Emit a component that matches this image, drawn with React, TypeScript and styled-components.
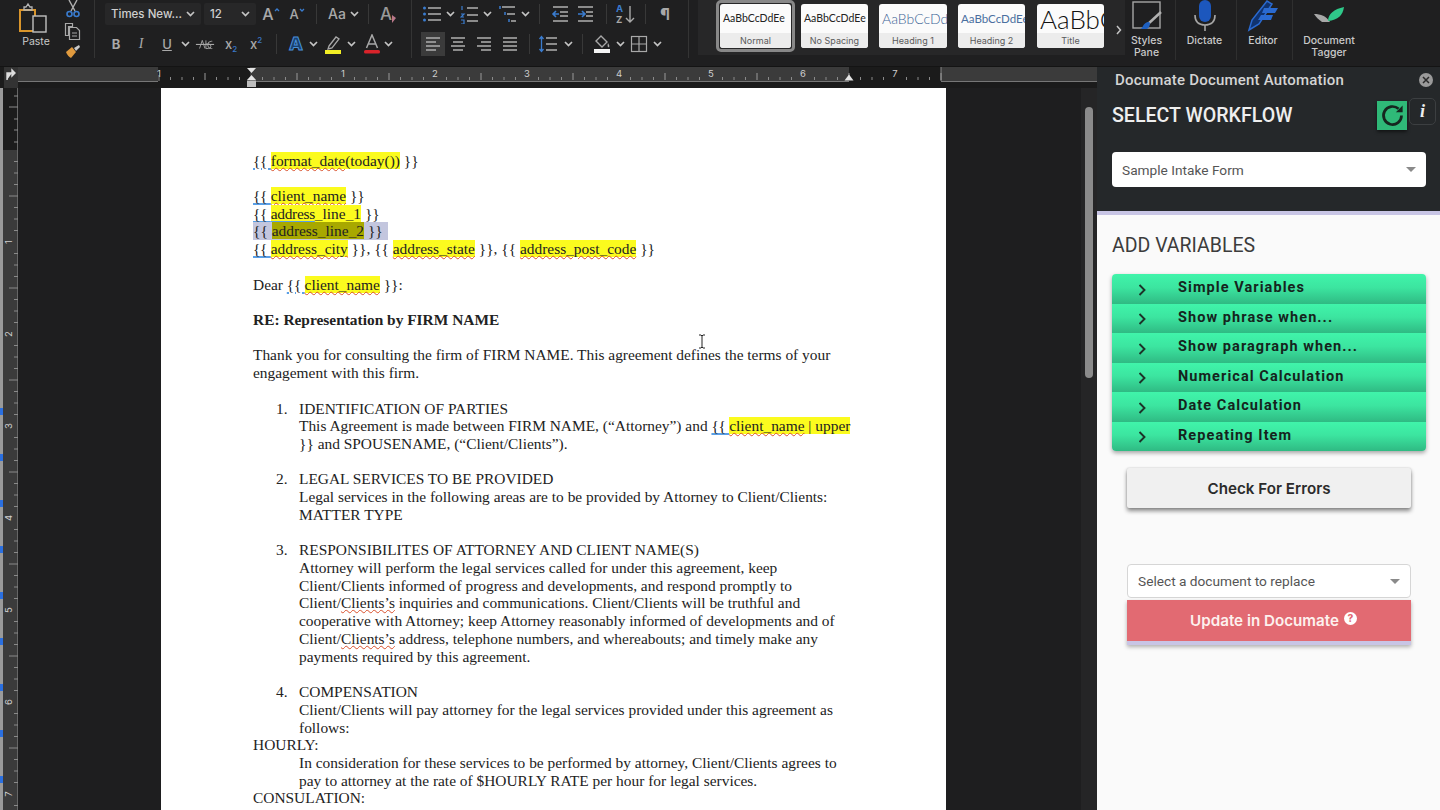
import React from "react";
import styled, { createGlobalStyle } from "styled-components";

const Global = createGlobalStyle`
  html, body { margin: 0; padding: 0; background: #1e1e1e; overflow: hidden; }
  * { box-sizing: border-box; }
`;

const UI = `Inter, "Liberation Sans", sans-serif`;

const Root = styled.div`
  width: 1440px; height: 810px; overflow: hidden; display: flex; flex-direction: column;
  background: #1e1e1f; font-family: ${UI};
`;

/* ---------- Ribbon ---------- */
const Ribbon = styled.header`
  height: 67px; flex: none; display: flex; background: #1f1f20; border-bottom: 1px solid #141414;
`;
const ClipSection = styled.section`
  width: 95px; height: 58px; flex: none; display: flex; border-right: 1px solid #343434;
`;
const PasteBlock = styled.div`
  width: 62px; padding-left: 17px; display: flex; flex-direction: column;
`;
const PasteTop = styled.div`
  height: 35px; display: flex; align-items: center; gap: 1px;
`;
const PasteLabel = styled.div`
  font-size: 10.5px; line-height: 14px; color: #c9c9c9; width: 38px; text-align: center;
`;
const ClipTools = styled.div`
  width: 22px; display: flex; flex-direction: column; align-items: center; justify-content: space-between; height: 60px;
`;
const ToolSection = styled.section<{ $w: number }>`
  width: ${p => p.$w}px; height: 58px; flex: none; border-right: 1px solid #343434;
  display: flex; flex-direction: column; gap: 8px; padding-top: 3px;
`;
const ToolRow = styled.div<{ $pad: number }>`
  height: 22px; display: flex; align-items: center; padding-left: ${p => p.$pad}px;
`;
const Slot = styled.div<{ $w?: number; $ml?: number; $active?: boolean }>`
  width: ${p => p.$w ?? 20}px; height: ${p => (p.$active ? 24 : 22)}px; margin-left: ${p => p.$ml ?? 0}px; flex: none;
  display: flex; align-items: center; justify-content: center;
  background: ${p => (p.$active ? "#3b3b3b" : "transparent")};
`;
const Sep = styled.div<{ $ml: number }>`
  width: 1px; height: 20px; flex: none; background: #383838; margin-left: ${p => p.$ml}px;
`;
const FieldBox = styled.div<{ $w: number; $ml: number }>`
  width: ${p => p.$w}px; margin-left: ${p => p.$ml}px; height: 22px; flex: none; background: #272728; border-radius: 2px;
  display: flex; align-items: center; justify-content: space-between; padding: 0 6px; font-size: 11.5px; font-weight: 500; color: #cfcfcf; white-space: nowrap;
`;
const Glyph = styled.span<{ $size?: number; $color?: string; $weight?: number; $italic?: boolean; $serif?: boolean; $under?: boolean; $stroke?: string }>`
  position: relative; font-size: ${p => p.$size ?? 13}px; color: ${p => p.$color ?? "#a9a9a9"}; font-weight: ${p => p.$weight ?? 500};
  font-style: ${p => (p.$italic ? "italic" : "normal")}; line-height: 1;
  font-family: ${p => (p.$serif ? `"Liberation Serif", serif` : UI)};
  text-decoration: ${p => (p.$under ? "underline" : "none")};
  -webkit-text-stroke: ${p => p.$stroke ?? "0"};
`;
const Sub = styled.sub`
  font-size: 8px; color: #3a78c8; vertical-align: -3px; line-height: 0;
`;
const Sup = styled.sup`
  font-size: 8px; color: #3a78c8; vertical-align: 6px; line-height: 0;
`;
const Gallery = styled.section`
  width: 427px; height: 55px; margin-left: 9px; flex: none; background: #272728; display: flex; align-items: flex-start; padding-left: 18px; position: relative;
`;
const SelectedFrame = styled.div`
  width: 79px; height: 52px; border: 3px solid #888; border-radius: 5px; padding: 1px; flex: none; display: flex;
`;
const Tile = styled.div<{ $w?: number; $ml?: number }>`
  width: ${p => (p.$w ? `${p.$w}px` : "100%")}; height: ${p => (p.$w ? "44px" : "100%")}; margin-top: ${p => (p.$w ? "4px" : "0")}; margin-left: ${p => p.$ml ?? 0}px;
  flex: none; background: #fbfbfb; border-radius: 3px; overflow: hidden; display: flex; flex-direction: column;
`;
const TileSample = styled.div<{ $size: number; $color?: string; $light?: boolean }>`
  height: 29px; font-family: Lato, "Liberation Sans", sans-serif; font-size: ${p => p.$size}px; color: ${p => p.$color ?? "#222"};
  font-weight: ${p => (p.$light ? 300 : 400)};
  white-space: nowrap; overflow: hidden; display: flex; align-items: center; padding-left: 3px; line-height: 1;
`;
const TileName = styled.div`
  flex: 1; background: #ececec; font-size: 9px; color: #5a5a5a; display: flex; align-items: center; justify-content: center;
`;
const GalleryNext = styled.div`
  position: absolute; right: 3px; top: 19px;
`;
const BigBtn = styled.div<{ $w: number; $pr?: number; $noline?: boolean }>`
  width: ${p => p.$w}px; height: 60px; flex: none; padding-right: ${p => p.$pr ?? 0}px;
  border-right: ${p => (p.$noline ? "none" : "1px solid #2f2f2f")};
  display: flex; flex-direction: column; align-items: center;
`;
const BigIcon = styled.div`
  height: 35px; flex: none; display: flex; align-items: flex-start; justify-content: center;
`;
const BigLabel = styled.div`
  font-size: 10.5px; line-height: 12px; color: #c9c9c9; text-align: center; white-space: pre-line; font-weight: 500; flex: none;
`;

const Caret = () => (
  <svg width="9" height="6" viewBox="0 0 9 6"><path d="M1 1l3.5 3.5L8 1" fill="none" stroke="#c4c4c4" strokeWidth="1.7" /></svg>
);
const CaretSlot = ({ ml }: { ml: number }) => <Slot $w={10} $ml={ml}><Caret /></Slot>;

const Ico = ({ children, w = 20, h = 20 }: { children: React.ReactNode; w?: number; h?: number }) => (
  <svg width={w} height={h} viewBox={`0 0 ${w} ${h}`} fill="none">{children}</svg>
);
const G = "#a8a8a8";
const B = "#3a7ccf";
const Lines = ({ rows }: { rows: [number, number, number][] }) => (
  <>{rows.map(([x1, x2, y], i) => <path key={i} d={`M${x1} ${y}H${x2}`} stroke={G} strokeWidth="1.6" />)}</>
);

/* ---------- Ruler ---------- */
const RulerBar = styled.svg`
  display: block; flex: none;
`;
const Ruler = () => {
  const ticks: React.ReactNode[] = [];
  for (let i = 0; i <= 68; i++) {
    const x = 159 + i * 11.5;
    if (i % 8 === 0) continue;
    const tall = i % 8 === 4;
    ticks.push(<path key={i} d={`M${x} ${tall ? 6 : 10}V13`} stroke={tall ? "#9a9a9a" : "#8a8a8a"} strokeWidth="1" />);
  }
  const nums: [string, number][] = [["1", 159], ["1", 343], ["2", 435], ["3", 527], ["4", 619], ["5", 711], ["6", 803], ["7", 895]];
  return (
    <RulerBar width="1097" height="21" viewBox="0 0 1097 21">
      <rect width="1097" height="21" fill="#1b1b1b" />
      <rect x="4" width="14" height="21" fill="#333" />
      <rect x="18" width="140" height="14" fill="#3b3b3b" />
      <rect x="250" width="599" height="14" fill="#3b3b3b" />
      <rect x="941" width="156" height="14" fill="#3b3b3b" />
      <path d="M18 14.5H158M250 14.5H849M941 14.5H1097" stroke="#777" />
      <path d="M159 8V14M941 0V14" stroke="#888" />
      <path d="M7 13V6h5M12 3v6l3-3z" stroke="#ddd" strokeWidth="1.4" fill="#ddd" />
      {ticks}
      {nums.map(([n, x], i) => (
        <text key={i} x={x} y="10" textAnchor="middle" fontSize="9.5" fill="#cfcfcf" fontFamily="Inter, sans-serif">{n}</text>
      ))}
      <path d="M247 1h9l-4.500 5z" fill="#e4e4e4" />
      <path d="M247 13l4.500-5 4.500 5z" fill="#e4e4e4" />
      <rect x="247" y="13.500" width="9" height="6.500" fill="#bdbdbd" />
      <path d="M844.500 13.500l4.500-6 4.500 6z" fill="#e4e4e4" />
    </RulerBar>
  );
};

const VRuler = () => {
  const ticks: React.ReactNode[] = [];
  for (let i = 0; i < 60; i++) {
    const y = 62 + i * 11.5;
    const long = i % 8 === 4;
    if (i % 8 === 0) continue;
    ticks.push(<path key={i} d={`M${long ? 9 : 14} ${y}H18`} stroke="#8a8a8a" />);
  }
  const nums = [1, 2, 3, 4, 5, 6, 7];
  const blues = [320, 366, 412, 458, 504, 550, 596, 642, 688];
  return (
    <RulerBar width="18" height="722" viewBox="0 0 18 722">
      <rect width="3" height="722" fill="#9a9a9a" />
      <rect x="3" width="15" height="722" fill="#3b3b3b" />
      <rect x="3" width="15" height="62" fill="#1c1c1c" />
      <path d="M17.500 0V722" stroke="#666" />
      {[8, 19, 31, 42, 54].map(y => <path key={y} d={`M${y === 19 ? 9 : 14} ${y}H18`} stroke="#8a8a8a" />)}
      {blues.map(y => <rect key={y} y={y} width="3" height="7" fill="#2a6fe0" />)}
      {ticks}
      {nums.map((n, i) => (
        <text key={n} transform={`translate(11.500 ${154 + i * 92}) rotate(-90)`} textAnchor="middle" fontSize="9.500" fill="#cfcfcf" fontFamily="Inter, sans-serif">{n}</text>
      ))}
    </RulerBar>
  );
};

/* ---------- Document ---------- */
const Body = styled.main`
  flex: 1; display: flex; min-height: 0;
`;
const Work = styled.div`
  width: 1097px; flex: none; display: flex; flex-direction: column; min-height: 0;
`;
const DocRow = styled.div`
  flex: 1; display: flex; min-height: 0; overflow: hidden;
`;
const DocArea = styled.div`
  flex: 1; padding-left: 143px; background: #1e1e1f; overflow: hidden;
`;
const ScrollTrack = styled.div`
  width: 16px; flex: none; background: #252526; padding: 19px 3px 0 4px;
`;
const ScrollThumb = styled.div`
  width: 8px; height: 271px; border-radius: 4px; background: #8b8b8b;
`;
const Page = styled.article`
  width: 785px; min-height: 760px; background: #fff; padding: 63.5px 0 0 92px; position: relative;
  font-family: "Liberation Serif", "Times New Roman", serif; font-size: 15.42px; color: #222;
`;
const Line = styled.div<{ $indent?: boolean }>`
  height: 17.72px; line-height: 17.72px; white-space: nowrap; padding-left: ${p => (p.$indent ? "46px" : "0")};
`;
const NumLine = styled(Line)`
  display: flex; white-space: pre;
`;
const Num = styled.span`
  width: 46px; padding-left: 23px; flex: none;
`;
const Hl = styled.span<{ $dim?: boolean }>`
  background: ${p => (p.$dim ? "#a8a800" : "#fbfb1e")};
`;
const Wavy = styled.span`
  text-decoration: underline wavy #d8502c 1px; text-underline-offset: 1px;
`;
const Brace = styled.span`
  letter-spacing: -0.3px;
  text-decoration: underline solid #5a9fe6 2px; text-underline-offset: 2px;
`;
const Selected = styled.span`
  background: #c3c6de; display: inline-block; height: 17.72px; padding-right: 5px;
`;
const Bold = styled.strong`
  font-weight: 700;
`;
const IBeam = styled.svg`
  position: absolute; left: 537px; top: 246px;
`;

const Tag = ({ name, rest = " }}" }: { name: string; rest?: string }) => (
  <><Brace>{"{{ "}</Brace><Hl><Wavy>{name}</Wavy></Hl>{rest}</>
);

/* ---------- Panel ---------- */
const Panel = styled.aside`
  flex: 1; display: flex; flex-direction: column; background: #fafafa; font-family: Roboto, sans-serif;
`;
const PanelHead = styled.div`
  height: 148px; flex: none; background: #25282a; border-bottom: 4px solid #c8c5e5; display: flex; flex-direction: column;
`;
const PanelTitleRow = styled.div`
  height: 31px; display: flex; align-items: flex-start; justify-content: space-between; padding: 5px 7px 0 18px;
`;
const PanelTitle = styled.div`
  font-size: 15px; line-height: 17px; font-weight: 500; color: #d4d4d4; letter-spacing: 0.2px;
`;
const CloseDot = styled.div`
  width: 14px; height: 14px; margin-top: 1px; border-radius: 50%; background: #9a9a9a; display: flex; align-items: center; justify-content: center;
`;
const WorkflowRow = styled.div`
  height: 33px; display: flex; align-items: flex-start; padding: 0 4px 0 15px;
`;
const WorkflowTitle = styled.h2`
  margin: 6px 0 0; font-size: 19.6px; line-height: 24px; font-weight: 500; color: #eee; white-space: nowrap;
`;
const RefreshBtn = styled.div`
  width: 30px; height: 29px; margin: 3px 0 0 auto; background: #2fb978; box-shadow: 0 2px 3px rgba(0,0,0,.5); display: flex; align-items: center; justify-content: center;
`;
const InfoBtn = styled.div`
  width: 27px; height: 27px; margin-left: 2px; border: 1px solid #3c3f41; border-radius: 5px; display: flex; align-items: center; justify-content: center;
  font-family: "Liberation Serif", serif; font-style: italic; font-weight: 700; font-size: 18px; color: #eee;
`;
const SelectBox = styled.div<{ $w: number; $h: number; $mt: number; $ml: number; $border?: boolean }>`
  width: ${p => p.$w}px; height: ${p => p.$h}px; margin: ${p => p.$mt}px 0 0 ${p => p.$ml}px; flex: none; background: #fff; border-radius: 4px;
  border: ${p => (p.$border ? "1px solid #d6d6d6" : "none")};
  display: flex; align-items: center; justify-content: space-between; padding: 0 10px; font-size: 13.7px; color: #555;
`;
const DownTri = styled.span`
  width: 0; height: 0; border-left: 5px solid transparent; border-right: 5px solid transparent; border-top: 5px solid #8a8a8a;
`;
const PanelBody = styled.div`
  flex: 1; display: flex; flex-direction: column;
`;
const AddTitle = styled.h2`
  margin: 19px 0 0 15px; font-size: 19.5px; line-height: 24px; font-weight: 400; color: #3c3c3c;
`;
const Accordion = styled.div`
  width: 314px; margin: 16px 0 0 15px; border-radius: 4px; overflow: hidden; box-shadow: 0 2px 4px rgba(0,0,0,.35); flex: none;
`;
const AccRow = styled.div`
  height: 29.5px; display: flex; align-items: center; padding-left: 26px; padding-bottom: 2px;
  background: linear-gradient(#40f4aa, #3ce5a0 45%, #2fba83);
  font-size: 14.5px; font-weight: 700; letter-spacing: 1.07px; color: #15241d; white-space: nowrap;
`;
const AccIcon = styled.span`
  width: 40px; display: flex; flex: none; margin-top: 4px;
`;
const CheckBtn = styled.div`
  width: 284px; height: 40px; margin: 17px 0 0 30px; flex: none; background: #f0f0f0; border-radius: 2px;
  box-shadow: 0 3px 4px rgba(0,0,0,.45), 0 0 2px rgba(0,0,0,.2);
  display: flex; align-items: center; justify-content: center; font-family: Inter, sans-serif; font-size: 15.2px; font-weight: 600; color: #2b2b2b;
`;
const UpdateBtn = styled.div`
  width: 284px; height: 45px; margin: 2px 0 0 30px; flex: none; background: #e26a72; border-bottom: 4px solid #c8c5e5;
  box-shadow: 0 2px 4px rgba(0,0,0,.3);
  display: flex; align-items: center; justify-content: center; gap: 5px; padding-left: 9px;
  font-family: Inter, sans-serif; font-size: 15.2px; font-weight: 600; color: #fdf1ee;
`;
const HelpDot = styled.span`
  width: 13px; height: 13px; margin-top: -5px; border-radius: 50%; background: #fff; color: #e26a72; font-size: 10px; font-weight: 800; line-height: 13px; text-align: center;
`;

const ACCORDION = ["Simple Variables", "Show phrase when...", "Show paragraph when...", "Numerical Calculation", "Date Calculation", "Repeating Item"];

export default function App() {
  return (
    <Root>
      <Global />
      <Ribbon>
        <ClipSection>
          <PasteBlock>
            <PasteTop>
              <Ico w={34} h={32}>
                <rect x="3" y="8" width="15" height="21" stroke="#d9952b" strokeWidth="2" />
                <path d="M7 8V5h2l2-3 2 3h2v3z" stroke="#b5b5b5" strokeWidth="1.300" />
                <rect x="16" y="14" width="13" height="16" fill="#1f1f20" stroke="#c0c0c0" strokeWidth="1.400" />
              </Ico>
            </PasteTop>
            <PasteLabel>Paste</PasteLabel>
          </PasteBlock>
          <ClipTools>
            <Ico w={16} h={18}>
              <path d="M4 0l6 11M12 0L6 11" stroke="#b0b0b0" strokeWidth="1.400" />
              <circle cx="4.500" cy="14" r="2.500" stroke="#3a7ccf" strokeWidth="1.600" />
              <circle cx="11.500" cy="14" r="2.500" stroke="#3a7ccf" strokeWidth="1.600" />
            </Ico>
            <Ico w={18} h={18}>
              <path d="M1.500 1.500h7v3h-4v9h-3z" stroke={G} strokeWidth="1.200" />
              <path d="M5.500 5.500h7l3 3v9h-10z" stroke={G} strokeWidth="1.200" />
              <path d="M8 11h5M8 14h5" stroke={G} />
            </Ico>
            <Ico w={18} h={16}>
              <path d="M2 8l6-5 4 5-5 6C5 13 3 11 2 8z" fill="#e09a3e" />
              <path d="M10 4l5-3 1 2-4 4z" fill="#c9c9c9" />
            </Ico>
          </ClipTools>
        </ClipSection>

        <ToolSection $w={317}>
          <ToolRow $pad={10}>
            <FieldBox $w={96} $ml={0}>Times New...<Caret /></FieldBox>
            <FieldBox $w={52} $ml={3}>12<Caret /></FieldBox>
            <Slot $ml={5}>
              <Glyph $size={16}>A</Glyph>
              <Ico w={6} h={16}><path d="M1 5l2-2 2 2" stroke={B} strokeWidth="1.300" /></Ico>
            </Slot>
            <Slot $ml={6}>
              <Glyph $size={13}>A</Glyph>
              <Ico w={6} h={16}><path d="M1 3l2 2 2-2" stroke={B} strokeWidth="1.300" /></Ico>
            </Slot>
            <Sep $ml={9} />
            <Slot $ml={10}><Glyph $size={14}>Aa</Glyph></Slot>
            <CaretSlot ml={2} />
            <Sep $ml={9} />
            <Slot $ml={10}>
              <Glyph $size={17} $color="#999">A</Glyph>
              <Ico w={6} h={18}><path d="M-6 16l6-6 4 3-4 5h-4z" fill="#b9788a" /></Ico>
            </Slot>
          </ToolRow>
          <ToolRow $pad={11}>
            <Slot><Glyph $weight={700}>B</Glyph></Slot>
            <Slot $ml={5}><Glyph $italic $serif $size={14}>I</Glyph></Slot>
            <Slot $ml={6}><Glyph $under>U</Glyph></Slot>
            <CaretSlot ml={3} />
            <Slot $ml={5}>
              <Ico w={22} h={16}>
                <path d="M1 8.500h20" stroke={G} strokeWidth="1.200" />
                <path d="M5 13l3-9 3 9M12 4v9h3a2 2 0 000-5h-3M19 5h-1a4 4 0 000 8h1" stroke={G} strokeWidth="1" />
              </Ico>
            </Slot>
            <Slot $ml={6}><Glyph>x<Sub>2</Sub></Glyph></Slot>
            <Slot $ml={5}><Glyph>x<Sup>2</Sup></Glyph></Slot>
            <Sep $ml={10} />
            <Slot $ml={9}><Glyph $size={18} $weight={800} $color="#17406f" $stroke="1px #4a90d9">A</Glyph></Slot>
            <CaretSlot ml={2} />
            <Slot $ml={5}>
              <Ico w={20} h={20}>
                <path d="M6 12l7-9 3 2-7 9-4 1z" stroke={G} strokeWidth="1.300" />
                <rect x="2" y="16" width="16" height="4" fill="#f2ee25" />
              </Ico>
            </Slot>
            <CaretSlot ml={3} />
            <Slot $ml={6}>
              <Ico w={18} h={20}>
                <path d="M3.500 14L9 1l5.500 13M5.500 10h7" stroke={G} strokeWidth="1.500" />
                <rect x="1" y="16" width="16" height="3.500" rx="1.500" fill="#d9232a" />
              </Ico>
            </Slot>
            <CaretSlot ml={1} />
          </ToolRow>
        </ToolSection>

        <ToolSection $w={277}>
          <ToolRow $pad={10}>
            <Slot>
              <Ico>
                <path d="M2.500 4v.1M2.500 10v.1M2.500 16v.1" stroke={B} strokeWidth="3" strokeLinecap="round" />
                <Lines rows={[[6, 19, 4], [6, 19, 10], [6, 19, 16]]} />
              </Ico>
            </Slot>
            <CaretSlot ml={3} />
            <Slot $ml={5}>
              <Ico>
                <path d="M2 2v4M1 10h3l-3 3h3M1 16h3v4H1" stroke={B} strokeWidth="1.200" />
                <Lines rows={[[7, 18, 4], [7, 18, 11], [7, 18, 17]]} />
              </Ico>
            </Slot>
            <CaretSlot ml={2} />
            <Slot $ml={6}>
              <Ico>
                <path d="M2 2v3M7 8v3M11 15v3" stroke={B} strokeWidth="1.500" />
                <Lines rows={[[4, 17, 3], [9, 17, 10], [13, 18, 17]]} />
              </Ico>
            </Slot>
            <CaretSlot ml={2} />
            <Sep $ml={9} />
            <Slot $ml={10}>
              <Ico>
                <Lines rows={[[3, 18, 3], [10, 18, 8], [10, 18, 12], [3, 18, 17]]} />
                <path d="M9 10H3M6 7l-3 3 3 3" stroke={B} strokeWidth="1.600" />
              </Ico>
            </Slot>
            <Slot $ml={5}>
              <Ico>
                <Lines rows={[[3, 18, 3], [11, 18, 8], [11, 18, 12], [3, 18, 17]]} />
                <path d="M3 10h6M7 7l3 3-3 3" stroke={B} strokeWidth="1.600" />
              </Ico>
            </Slot>
            <Sep $ml={11} />
            <Slot $ml={8}>
              <Ico w={20} h={22}>
                <text x="1" y="9" fontSize="9.500" fontWeight="700" fill={B} fontFamily="Inter, sans-serif">A</text>
                <text x="1" y="20" fontSize="9.500" fontWeight="700" fill={G} fontFamily="Inter, sans-serif">Z</text>
                <path d="M15 3v16M11 15l4 4 4-4" stroke={G} strokeWidth="1.400" />
              </Ico>
            </Slot>
            <Sep $ml={10} />
            <Slot $ml={9}><Glyph $size={16} $weight={800}>¶</Glyph></Slot>
          </ToolRow>
          <ToolRow $pad={9}>
            <Slot $w={24} $active>
              <Ico w={16} h={16}><Lines rows={[[1, 15, 2], [1, 11, 6], [1, 15, 10], [1, 11, 14]]} /></Ico>
            </Slot>
            <Slot $ml={3}>
              <Ico w={16} h={16}><Lines rows={[[1, 15, 2], [3, 13, 6], [1, 15, 10], [3, 13, 14]]} /></Ico>
            </Slot>
            <Slot $ml={6}>
              <Ico w={16} h={16}><Lines rows={[[1, 15, 2], [5, 15, 6], [1, 15, 10], [5, 15, 14]]} /></Ico>
            </Slot>
            <Slot $ml={6}>
              <Ico w={16} h={16}><Lines rows={[[1, 15, 2], [1, 15, 6], [1, 15, 10], [1, 15, 14]]} /></Ico>
            </Slot>
            <Sep $ml={9} />
            <Slot $ml={8}>
              <Ico>
                <Lines rows={[[8, 19, 4], [8, 19, 10], [8, 19, 16]]} />
                <path d="M3.500 3v14M1.500 5l2-2.500 2 2.500M1.500 15l2 2.500 2-2.500" stroke={B} strokeWidth="1.300" />
              </Ico>
            </Slot>
            <CaretSlot ml={5} />
            <Sep $ml={9} />
            <Slot $ml={9}>
              <Ico w={18} h={20}>
                <path d="M8 2l6 6-5 5-6-6z" stroke={G} strokeWidth="1.400" />
                <path d="M15 9c1 2 2 3 1 4s-2-1-1-4z" fill={G} />
                <rect x="1" y="15" width="16" height="4" fill="#f4f4f4" />
              </Ico>
            </Slot>
            <CaretSlot ml={3} />
            <Slot $ml={4}>
              <Ico w={18} h={18}>
                <rect x="1.500" y="1.500" width="15" height="15" stroke={G} strokeWidth="1.200" />
                <path d="M9 1.500v15M1.500 9h15" stroke={G} strokeWidth="1.200" />
              </Ico>
            </Slot>
            <CaretSlot ml={3} />
          </ToolRow>
        </ToolSection>

        <Gallery>
          <SelectedFrame>
            <Tile>
              <TileSample $size={10.5}>AaBbCcDdEe</TileSample>
              <TileName>Normal</TileName>
            </Tile>
          </SelectedFrame>
          <Tile $w={67} $ml={6}>
            <TileSample $size={10.5}>AaBbCcDdEe</TileSample>
            <TileName>No Spacing</TileName>
          </Tile>
          <Tile $w={68} $ml={11}>
            <TileSample $size={14} $color="#3d6496" $light>AaBbCcDdEe</TileSample>
            <TileName>Heading 1</TileName>
          </Tile>
          <Tile $w={67} $ml={11}>
            <TileSample $size={11.5} $color="#4a6f9f">AaBbCcDdEe</TileSample>
            <TileName>Heading 2</TileName>
          </Tile>
          <Tile $w={67} $ml={12}>
            <TileSample $size={26} $color="#111" $light>AaBbCcDd</TileSample>
            <TileName>Title</TileName>
          </Tile>
          <GalleryNext>
            <Ico w={6} h={10}><path d="M1 1l3.500 4L1 9" stroke="#c4c4c4" strokeWidth="1.500" /></Ico>
          </GalleryNext>
        </Gallery>

        <BigBtn $w={51} $pr={7}>
          <BigIcon>
            <Ico w={32} h={32}>
              <rect x="2" y="2" width="27" height="26" stroke="#a5a5a5" strokeWidth="1.400" />
              <path d="M30 12L17 24" stroke="#b0b0b0" strokeWidth="2.500" />
              <path d="M18 22c-3 0-5 2-6 4s-2 3-3 3h7c2-1 3-4 3-6z" fill="#1d5fc0" />
            </Ico>
          </BigIcon>
          <BigLabel>{"Styles\nPane"}</BigLabel>
        </BigBtn>
        <BigBtn $w={61} $pr={3}>
          <BigIcon>
            <Ico w={24} h={32}>
              <rect x="6" y="0" width="12" height="22" rx="6" fill="#1c57bd" />
              <path d="M2 15c0 7 4 10 10 10s10-3 10-10M12 25v6" stroke="#a5a5a5" strokeWidth="1.600" />
            </Ico>
          </BigIcon>
          <BigLabel>Dictate</BigLabel>
        </BigBtn>
        <BigBtn $w={56} $pr={3}>
          <BigIcon>
            <Ico w={32} h={32}>
              <path d="M2 30L5 20 20 1l5 3-13 20z" fill="#10336f" stroke="#2a6ad0" strokeWidth="1.500" />
              <path d="M17 8h14l-3 5H15zM14 15h12l-2 5H11z" fill="#2a6ad0" />
            </Ico>
          </BigIcon>
          <BigLabel>Editor</BigLabel>
        </BigBtn>
        <BigBtn $w={72} $noline>
          <BigIcon>
            <Ico w={34} h={32}>
              <path d="M2 14c7 0 12 2 16 8h-8C7 20 4 17 2 14z" fill="#a8a8a8" />
              <path d="M16 21c0-7 6-12 16-14-1 8-6 13-16 14z" fill="#2fc98a" />
            </Ico>
          </BigIcon>
          <BigLabel>{"Document\nTagger"}</BigLabel>
        </BigBtn>
      </Ribbon>

      <Body>
        <Work>
          <Ruler />
          <DocRow>
            <VRuler />
            <DocArea>
              <Page>
                <Line><Tag name="format_date" rest="" /><Hl>(today())</Hl>{" }}"}</Line>
                <Line>&nbsp;</Line>
                <Line><Tag name="client_name" /></Line>
                <Line><Brace>{"{{ "}</Brace><Hl><Brace>address</Brace>_line_1</Hl>{" }}"}</Line>
                <Line><Selected>{"{{ "}<Hl $dim>address_line_2</Hl>{" }}"}</Selected></Line>
                <Line><Tag name="address_city" />{", {{ "}<Hl><Wavy>address_state</Wavy></Hl>{" }}, {{ "}<Hl><Wavy>address_post_code</Wavy></Hl>{" }}"}</Line>
                <Line>&nbsp;</Line>
                <Line>Dear <Tag name="client_name" rest=" }}:" /></Line>
                <Line>&nbsp;</Line>
                <Line><Bold>RE: Representation by FIRM NAME</Bold></Line>
                <Line>&nbsp;</Line>
                <Line>Thank you for consulting the firm of FIRM NAME. This agreement defines the terms of your</Line>
                <Line>engagement with this firm.</Line>
                <Line>&nbsp;</Line>
                <NumLine><Num>1.</Num>IDENTIFICATION OF PARTIES</NumLine>
                <Line $indent>This Agreement is made between FIRM NAME, (“Attorney”) and <Brace>{"{{ "}</Brace><Hl><Wavy>client_name</Wavy> | upper</Hl></Line>
                <Line $indent>{"}} and SPOUSENAME, (“Client/Clients”)."}</Line>
                <Line>&nbsp;</Line>
                <NumLine><Num>2.</Num>LEGAL SERVICES TO BE PROVIDED</NumLine>
                <Line $indent>Legal services in the following areas are to be provided by Attorney to Client/Clients:</Line>
                <Line $indent>MATTER TYPE</Line>
                <Line>&nbsp;</Line>
                <NumLine><Num>3.</Num>RESPONSIBILITES OF ATTORNEY AND CLIENT NAME(S)</NumLine>
                <Line $indent>Attorney will perform the legal services called for under this agreement, keep</Line>
                <Line $indent>Client/Clients informed of progress and developments, and respond promptly to</Line>
                <Line $indent>Client/<Wavy>Clients’s</Wavy> inquiries and communications. Client/Clients will be truthful and</Line>
                <Line $indent>cooperative with Attorney; keep Attorney reasonably informed of developments and of</Line>
                <Line $indent>Client/<Wavy>Clients’s</Wavy> address, telephone numbers, and whereabouts; and timely make any</Line>
                <Line $indent>payments required by this agreement.</Line>
                <Line>&nbsp;</Line>
                <NumLine><Num>4.</Num>COMPENSATION</NumLine>
                <Line $indent>Client/Clients will pay attorney for the legal services provided under this agreement as</Line>
                <Line $indent>follows:</Line>
                <Line>HOURLY:</Line>
                <Line $indent>In consideration for these services to be performed by attorney, Client/Clients agrees to</Line>
                <Line $indent>pay to attorney at the rate of $HOURLY RATE per hour for legal services.</Line>
                <Line>CONSULATION:</Line>
                <IBeam width="8" height="15" viewBox="0 0 8 15">
                  <path d="M1 1h2l1 1 1-1h2M4 2v11M1 14h2l1-1 1 1h2" fill="none" stroke="#222" strokeWidth="1" />
                </IBeam>
              </Page>
            </DocArea>
            <ScrollTrack><ScrollThumb /></ScrollTrack>
          </DocRow>
        </Work>

        <Panel>
          <PanelHead>
            <PanelTitleRow>
              <PanelTitle>Documate Document Automation</PanelTitle>
              <CloseDot>
                <svg width="8" height="8" viewBox="0 0 8 8"><path d="M1 1l6 6M7 1L1 7" stroke="#2a2a2a" strokeWidth="1.500" /></svg>
              </CloseDot>
            </PanelTitleRow>
            <WorkflowRow>
              <WorkflowTitle>SELECT WORKFLOW</WorkflowTitle>
              <RefreshBtn>
                <svg width="27" height="27" viewBox="0 0 24 24" fill="none">
                  <path d="M20 12a8 8 0 1 1-2.600-5.900" stroke="#16261f" strokeWidth="2.400" />
                  <path d="M21 3v6h-6z" fill="#16261f" />
                </svg>
              </RefreshBtn>
              <InfoBtn>i</InfoBtn>
            </WorkflowRow>
            <SelectBox $w={314} $h={35} $mt={21} $ml={15}>Sample Intake Form<DownTri /></SelectBox>
          </PanelHead>
          <PanelBody>
            <AddTitle>ADD VARIABLES</AddTitle>
            <Accordion>
              {ACCORDION.map(label => (
                <AccRow key={label}>
                  <AccIcon>
                    <svg width="9" height="12" viewBox="0 0 9 12"><path d="M1.500 1l5 5-5 5" fill="none" stroke="#1c3329" strokeWidth="1.900" /></svg>
                  </AccIcon>
                  {label}
                </AccRow>
              ))}
            </Accordion>
            <CheckBtn>Check For Errors</CheckBtn>
            <SelectBox $w={284} $h={34} $mt={56} $ml={30} $border>Select a document to replace<DownTri /></SelectBox>
            <UpdateBtn>Update in Documate<HelpDot>?</HelpDot></UpdateBtn>
          </PanelBody>
        </Panel>
      </Body>
    </Root>
  );
}
